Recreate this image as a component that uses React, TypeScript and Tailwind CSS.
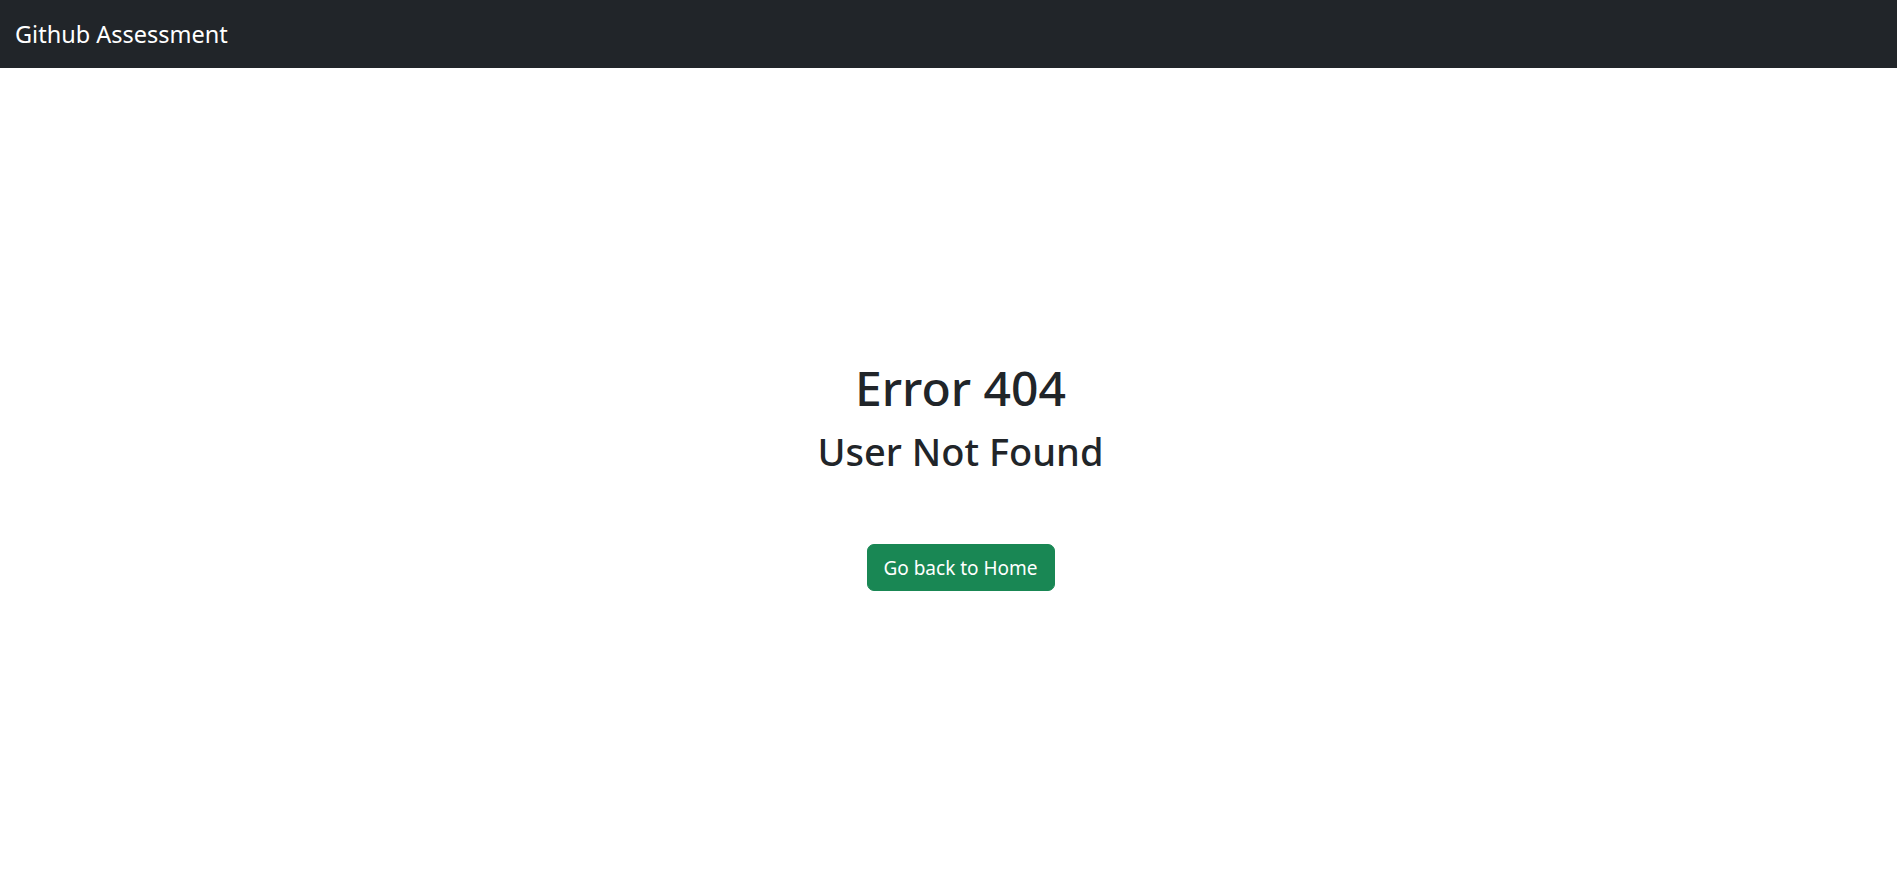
import React from "react";

export default function App() {
  return (
    <div className="min-h-screen bg-white text-[#212529]" style={{ fontFamily: '"Noto Sans", "Open Sans", sans-serif' }}>
      {/* Navbar */}
      <nav className="h-[68px] bg-[#212529] flex items-center px-[15px]">
        <a href="#" className="text-white text-[23.5px] leading-[37px]">
          Github Assessment
        </a>
      </nav>

      {/* Not found */}
      <main className="flex flex-col items-center pt-[290px] pl-[24px]">
        <h1 className="text-[48px] leading-[60px] font-medium">Error 404</h1>
        <h3 className="mt-[12px] text-[38px] leading-[42px] font-medium">User Not Found</h3>
        <button className="mt-[72px] h-[47px] w-[188px] rounded-[7px] bg-[#198754] text-white text-[19px] leading-[30px] border border-[#198754]">
          Go back to Home
        </button>
      </main>
    </div>
  );
}
